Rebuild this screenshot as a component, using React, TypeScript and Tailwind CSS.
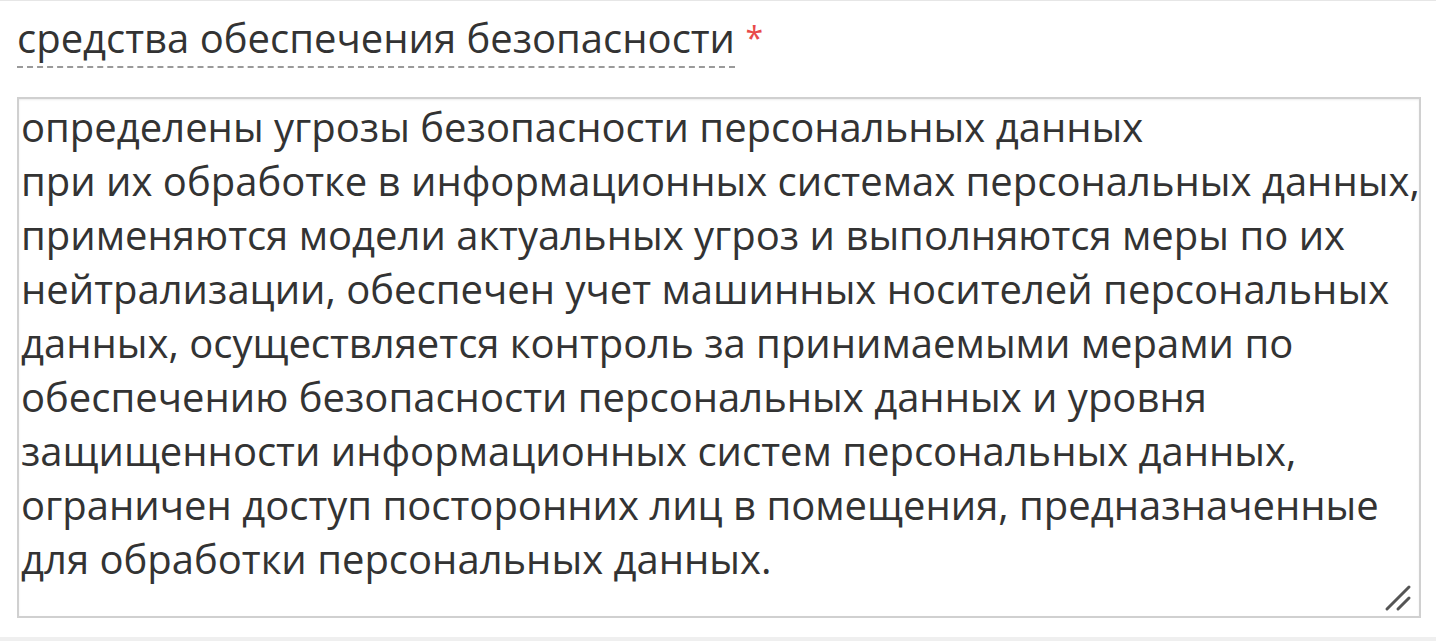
import React from "react";

const LINES = [
  "определены угрозы безопасности персональных данных",
  "при их обработке в информационных системах персональных данных,",
  "применяются модели актуальных угроз и выполняются меры по их",
  "нейтрализации, обеспечен учет машинных носителей персональных",
  "данных, осуществляется контроль за принимаемыми мерами по",
  "обеспечению безопасности персональных данных и уровня",
  "защищенности информационных систем персональных данных,",
  "ограничен доступ посторонних лиц в помещения, предназначенные",
  "для обработки персональных данных.",
];

const font = { fontFamily: '"Open Sans", "Noto Sans", sans-serif' };

export default function App() {
  return (
    <div
      className="w-[1436px] h-[641px] bg-white border-t border-[#e6e6e6] flex flex-col"
      style={font}
    >
      <div className="px-[17px] pt-[15px] flex-1">
        <label className="block text-[40px] leading-[44px] text-[#333] mb-[37px]">
          <span className="border-b-2 border-dashed border-[#9a9a9a] pb-[1px]">
            средства обеспечения безопасности
          </span>{" "}
          <span className="text-[32px] align-top text-[#e84a4a]">*</span>
        </label>
        <div className="relative w-[1404px] h-[521px]">
          <textarea
            defaultValue={LINES.join("\n")}
            wrap="off"
            className="block w-full h-full border-2 border-[#d0d0d0] bg-white pl-[2px] pr-[2px] pt-[1px] text-[40px] leading-[54px] text-[#333] whitespace-pre overflow-hidden resize-none outline-none shadow-[inset_0_1px_2px_rgba(0,0,0,0.08)]"
            style={font}
          />
          <svg
            className="absolute right-[9px] bottom-[6px]"
            width="28"
            height="28"
            viewBox="0 0 28 28"
          >
            <path
              d="M3 25 L25 3 M14 25 L25 14"
              stroke="#555"
              strokeWidth="3"
              strokeLinecap="round"
            />
          </svg>
        </div>
      </div>
      <div className="h-[4px] bg-[#efefef]" />
    </div>
  );
}
